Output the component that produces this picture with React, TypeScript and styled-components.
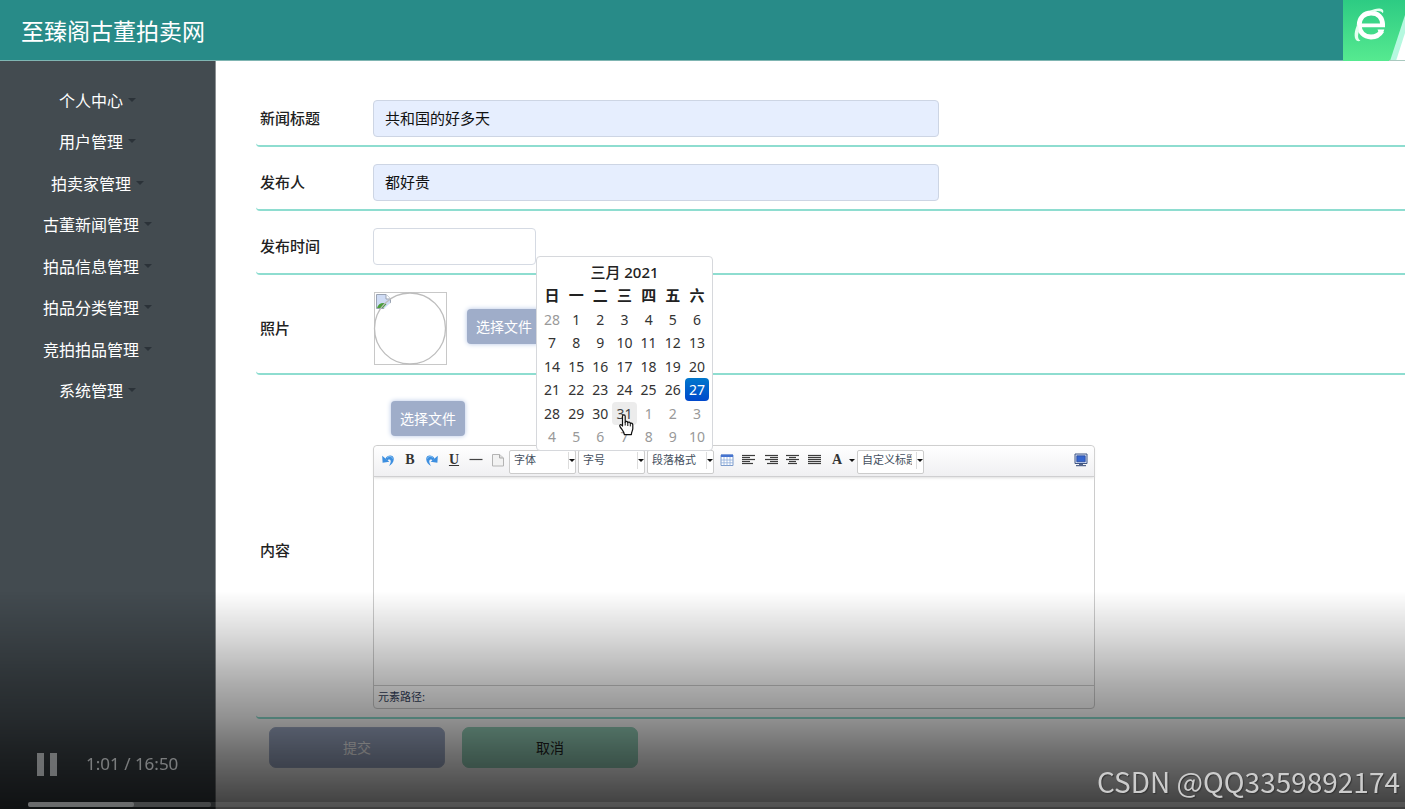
import React from "react";
import styled, { createGlobalStyle } from "styled-components";

const sans = `"Noto Sans", "Noto Sans CJK SC", sans-serif`;
const han = `"Noto Sans CJK SC", sans-serif`;

const GlobalStyle = createGlobalStyle`
  *, *::before, *::after { box-sizing: border-box; }
  body { margin: 0; background: #fff; font-family: ${han}; color: #222; }
  button, input, select, textarea { font-family: inherit; margin: 0; }
`;

const Page = styled.div`
  display: flex;
  flex-direction: column;
  min-height: 100vh;
  overflow: hidden;
`;

const Header = styled.header`
  display: flex;
  align-items: center;
  justify-content: space-between;
  height: 61px;
  padding-left: 21px;
  background: #288b88;
  border-bottom: 1px solid #7fb5b2;
`;

const SiteTitle = styled.h1`
  margin: 0;
  font-size: 23px;
  font-weight: 400;
  line-height: 30px;
  color: #fff;
`;

const BrowserBadge = styled.svg`
  display: block;
  width: 62px;
  height: 61px;
`;

const Body = styled.div`
  display: flex;
  flex: 1;
`;

const Sidebar = styled.nav`
  flex: 0 0 216px;
  padding: 18px 20px 0 0;
  background: #434b50;
  border-right: 1px solid #8d9194;
`;

const Menu = styled.ul`
  display: grid;
  grid-auto-rows: 1fr;
  height: 332px;
  margin: 0;
  padding: 0;
  list-style: none;
`;

const MenuItem = styled.li`
  display: flex;
  justify-content: center;
  align-items: center;
`;

const MenuLink = styled.a`
  display: flex;
  align-items: center;
  gap: 5px;
  font-size: 16px;
  line-height: 24px;
  color: #fff;
  text-decoration: none;
  &::after {
    content: "";
    border: 4px solid transparent;
    border-top-color: #2b3238;
    border-bottom: 0;
  }
`;

const Main = styled.main`
  flex: 1;
  min-width: 0;
  padding: 22px 0 42px 40px;
`;

const Row = styled.div`
  display: flex;
  align-items: center;
  padding: 17px 0 8px 4px;
  border-bottom: 2px solid #8eddd0;
  border-bottom-left-radius: 4px;
`;

const RowLabel = styled.label`
  flex: 0 0 113px;
  padding-bottom: 2px;
  font-size: 15px;
  font-weight: 500;
  line-height: 24px;
  color: #222;
`;

const TextInput = styled.input<{ $filled?: boolean }>`
  width: ${(p) => (p.$filled ? "566px" : "163px")};
  height: 37px;
  padding: 0 11px 2px;
  font-size: 15px;
  color: #111;
  background: ${(p) => (p.$filled ? "#e6eefe" : "#fff")};
  border: 1px solid ${(p) => (p.$filled ? "#cdd5e4" : "#d5dae3")};
  border-radius: 4px;
`;

const DateField = styled.div`
  position: relative;
  display: flex;
`;

const Calendar = styled.div`
  position: absolute;
  z-index: 10;
  top: 28px;
  left: 163px;
  width: 177px;
  padding: 4px 3px 2px;
  background: #fff;
  border: 1px solid #d6d8dc;
  border-radius: 4px;
`;

const MonthTable = styled.table`
  width: 100%;
  table-layout: fixed;
  border-collapse: collapse;
  font-family: ${sans};
  font-size: 14px;
  color: #222;
  caption {
    height: 23px;
    font-size: 15px;
    font-weight: 500;
    line-height: 23px;
  }
  th {
    height: 23px;
    padding: 0;
    font-size: 15px;
    font-weight: 700;
    line-height: 23px;
  }
  td {
    position: relative;
    padding: 0;
  }
  tr {
    height: 23px;
  }
  tbody tr:nth-child(odd) {
    height: 24px;
  }
`;

const Day = styled.button<{ $tone: "normal" | "other" | "active" | "hover" }>`
  display: block;
  width: 100%;
  height: 23px;
  padding: 0;
  border: 0;
  border-radius: 4px;
  font-size: 14px;
  line-height: 23px;
  text-align: center;
  color: ${(p) => ({ normal: "#333", other: "#999", active: "#fff", hover: "#444" })[p.$tone]};
  background: ${(p) =>
    ({
      normal: "none",
      other: "none",
      active: "linear-gradient(#0077cc, #0048cc)",
      hover: "#ececec",
    })[p.$tone]};
`;

const Pointer = styled.svg`
  position: absolute;
  z-index: 1;
  top: 13px;
  left: 6px;
  width: 17px;
  height: 22px;
`;

const FileButton = styled.button`
  width: 74px;
  height: 35px;
  padding: 0 0 2px;
  border: 0;
  border-radius: 4px;
  font-size: 14px;
  color: #fff;
  background: #9fadc9;
  box-shadow: 0 0 5px #b4c4e4;
`;

const PhotoBox = styled.div`
  display: flex;
  align-items: center;
  gap: 20px;
  ${FileButton} {
    margin-bottom: 4px;
  }
`;

const Thumb = styled.svg`
  display: block;
  width: 74px;
  height: 73px;
`;

const EditorColumn = styled.div`
  display: flex;
  flex-direction: column;
  align-items: flex-start;
  gap: 9px;
  padding-top: 9px;
  ${FileButton} {
    margin-left: 18px;
  }
`;

const Editor = styled.div`
  width: 722px;
  border: 1px solid #ccc;
  border-radius: 4px;
`;

const Toolbar = styled.div`
  display: flex;
  align-items: center;
  height: 31px;
  padding: 0 2px 2px 3px;
  background: linear-gradient(#fff, #f0f0f2);
  border-bottom: 1px solid #cfcfd1;
  border-radius: 4px 4px 0 0;
  box-shadow: 0 1px 3px #ddd;
`;

const Tool = styled.button`
  display: flex;
  align-items: center;
  justify-content: center;
  width: 22px;
  height: 22px;
  padding: 0;
  border: 0;
  background: none;
  font-family: "Liberation Serif", serif;
  font-size: 14px;
  font-weight: 700;
  color: #333;
  svg {
    display: block;
    width: 16px;
    height: 16px;
  }
`;

const ColorArrow = styled(Tool)`
  width: 8px;
  margin-right: 1px;
`;

const Spacer = styled.span`
  flex: 1;
`;

const Picker = styled.span`
  position: relative;
  display: flex;
  width: 67px;
  height: 24px;
  margin: 3px 2px 0 0;
  &::after {
    content: "";
    position: absolute;
    right: 1px;
    top: 9px;
    border: 3px solid transparent;
    border-top-color: #111;
    border-bottom: 0;
  }
  &::before {
    content: "";
    position: absolute;
    right: 7px;
    top: 2px;
    height: 17px;
    border-left: 1px solid #ddd;
  }
`;

const PickerSelect = styled.select`
  appearance: none;
  width: 100%;
  padding: 0 11px 5px 4px;
  border: 1px solid #ccc;
  border-radius: 2px;
  background: #fff;
  font-size: 11px;
  color: #44505e;
`;

const Area = styled.textarea`
  display: block;
  width: 100%;
  height: 208px;
  padding: 8px;
  border: 0;
  resize: none;
  outline: 0;
  background: transparent;
`;

const PathBar = styled.div`
  height: 23px;
  padding-left: 4px;
  border-top: 1px solid #ccc;
  font-size: 11px;
  line-height: 20px;
  color: #33415c;
`;

const Actions = styled.div`
  display: flex;
  gap: 17px;
  padding: 8px 0 0 13px;
`;

const ActionButton = styled.button<{ $kind: "submit" | "cancel" }>`
  width: 176px;
  height: 41px;
  padding: 0 0 2px;
  border: 1px solid ${(p) => (p.$kind === "submit" ? "#a6b2cc" : "#98d4bd")};
  border-radius: 7px;
  font-size: 14px;
  color: ${(p) => (p.$kind === "submit" ? "#fff" : "#222")};
  background: ${(p) => (p.$kind === "submit" ? "#a0adc9" : "#98d4bd")};
`;

const PlayerShade = styled.div`
  position: fixed;
  z-index: 20;
  left: 0;
  right: 0;
  bottom: 0;
  height: 218px;
  display: flex;
  flex-direction: column;
  justify-content: flex-end;
  padding-bottom: 2px;
  pointer-events: none;
  background: linear-gradient(
    rgba(0, 0, 0, 0) 0%,
    rgba(0, 0, 0, 0.16) 22%,
    rgba(0, 0, 0, 0.32) 42%,
    rgba(0, 0, 0, 0.43) 58%,
    rgba(0, 0, 0, 0.57) 74%,
    rgba(0, 0, 0, 0.76) 100%
  );
`;

const PlayerControls = styled.div`
  display: flex;
  align-items: center;
  gap: 28px;
  padding: 0 0 25px 36px;
`;

const PauseButton = styled.button`
  width: 22px;
  height: 24px;
  padding: 0;
  border: 0;
  background: none;
  svg {
    display: block;
  }
`;

const Clock = styled.span`
  font-family: ${sans};
  font-size: 17px;
  line-height: 26px;
  color: rgba(255, 255, 255, 0.42);
`;

const Track = styled.div`
  height: 5px;
  margin-left: 28px;
  border-radius: 2px 0 0 2px;
  background: rgba(255, 255, 255, 0.09);
`;

const Buffered = styled.div`
  width: 183px;
  height: 5px;
  border-radius: 2px;
  background: rgba(255, 255, 255, 0.14);
`;

const Played = styled.div`
  width: 106px;
  height: 5px;
  border-radius: 2px;
  background: rgba(255, 255, 255, 0.2);
`;

const Watermark = styled.span`
  position: fixed;
  z-index: 21;
  right: 5px;
  bottom: 10px;
  font-family: ${han};
  font-size: 28px;
  line-height: 36px;
  color: #ccc;
  text-shadow: 1px 1px 1px #333;
`;

const menu = [
  "个人中心",
  "用户管理",
  "拍卖家管理",
  "古董新闻管理",
  "拍品信息管理",
  "拍品分类管理",
  "竞拍拍品管理",
  "系统管理",
];

const weekdays = ["日", "一", "二", "三", "四", "五", "六"];
// March 2021 opens on a Monday, so the grid starts on February 28.
const cells = Array.from({ length: 42 }, (_, i) => {
  if (i === 0) return { n: 28, other: true };
  if (i <= 31) return { n: i, other: false };
  return { n: i - 31, other: true };
});
const weeks = Array.from({ length: 6 }, (_, w) => cells.slice(w * 7, w * 7 + 7));

const toneOf = (c: { n: number; other: boolean }) =>
  c.other ? "other" : c.n === 27 ? "active" : c.n === 31 ? "hover" : "normal";

function HandPointer() {
  return (
    <Pointer viewBox="0 0 17 22" aria-hidden="true">
      <path
        d="M4.5 2.2C4.5.4 7.2.4 7.2 2.2V8.2C7.6 7 9.6 7.2 9.7 8.6C10.4 7.6 12.2 8 12.3 9.4C13.4 8.8 14.8 9.4 14.8 11V14.6C14.8 16.6 13.4 17.6 13.4 20.6H6.4C6.2 17.6 3.6 15.4 2 12.6C1 10.8 2.8 9.8 4.5 12Z"
        fill="#fff"
        stroke="#111"
        strokeWidth="1.2"
        strokeLinejoin="round"
      />
      <path d="M7.2 8V11.5M9.8 9V12M12.3 9.8V12.4" stroke="#111" strokeWidth="1" fill="none" />
    </Pointer>
  );
}

function UndoIcon({ flip }: { flip?: boolean }) {
  return (
    <svg viewBox="0 0 16 16" aria-hidden="true">
      <g transform={flip ? "translate(16 0) scale(-1 1)" : undefined}>
        <path
          d="M5.5 6.600C7 2.800 13.800 2.200 13.800 7C13.800 10.500 11.500 12.500 9 14C10.500 11.500 11 9.800 10.600 8.600C10 7 8.200 7.400 7.400 8.800Z"
          fill="#3d8fe0"
        />
        <path d="M2.200 3.800L2.600 10.800L9.400 9.800Z" fill="#3d8fe0" />
        <path d="M7 5.600C9 3.800 12 4 12.600 6.600" fill="none" stroke="#8cc6f6" strokeWidth="1" />
      </g>
    </svg>
  );
}

function AlignIcon({ lines }: { lines: [number, number][] }) {
  return (
    <svg viewBox="0 0 16 16" aria-hidden="true">
      {lines.map(([x1, x2], i) => (
        <path key={i} d={`M${x1} ${3.5 + i * 2}H${x2}`} stroke="#3c3c3c" strokeWidth="1.2" />
      ))}
    </svg>
  );
}

function ToolPicker({ name }: { name: string }) {
  return (
    <Picker>
      <PickerSelect aria-label={name}>
        <option>{name}</option>
      </PickerSelect>
    </Picker>
  );
}

function EditorToolbar() {
  return (
    <Toolbar>
      <Tool type="button" aria-label="撤销"><UndoIcon /></Tool>
      <Tool type="button">B</Tool>
      <Tool type="button" aria-label="重做"><UndoIcon flip /></Tool>
      <Tool type="button"><u>U</u></Tool>
      <Tool type="button" aria-label="分隔线">
        <svg viewBox="0 0 16 16"><path d="M1.5 7.5H14.5" stroke="#444" strokeWidth="1.2" /></svg>
      </Tool>
      <Tool type="button" aria-label="新建">
        <svg viewBox="0 0 16 16">
          <path d="M2.5 2.5H9.5L13.5 6V14H2.5Z" fill="#f2f2f2" stroke="#b4b4b4" />
          <path d="M9.5 2.5V6H13.5" fill="#ddd" stroke="#aaa" />
        </svg>
      </Tool>
      <ToolPicker name="字体" />
      <ToolPicker name="字号" />
      <ToolPicker name="段落格式" />
      <Tool type="button" aria-label="表格">
        <svg viewBox="0 0 16 16">
          <path d="M2 3H14V13.5H2Z" fill="#fff" stroke="#7d9ccc" />
          <path d="M2 2.5H14V5H2Z" fill="#4573cf" />
          <path d="M2 8H14M2 10.8H14M5 5V13.5M8 5V13.5M11 5V13.5" stroke="#90addb" strokeWidth=".8" />
        </svg>
      </Tool>
      <Tool type="button" aria-label="左对齐">
        <AlignIcon lines={[[1, 14], [1, 9], [1, 14], [1, 9], [1, 12]]} />
      </Tool>
      <Tool type="button" aria-label="右对齐">
        <AlignIcon lines={[[2, 15], [7, 15], [2, 15], [7, 15], [4, 15]]} />
      </Tool>
      <Tool type="button" aria-label="居中">
        <AlignIcon lines={[[1, 14], [4, 11], [1, 14], [4, 11], [3, 12]]} />
      </Tool>
      <Tool type="button" aria-label="两端对齐">
        <AlignIcon lines={[[1, 14], [1, 14], [1, 14], [1, 14], [1, 14]]} />
      </Tool>
      <Tool type="button">A</Tool>
      <ColorArrow type="button" aria-label="字体颜色">
        <svg viewBox="0 0 16 16"><path d="M2 6H14L8 12Z" fill="#111" /></svg>
      </ColorArrow>
      <ToolPicker name="自定义标题" />
      <Spacer />
      <Tool type="button" aria-label="全屏">
        <svg viewBox="0 0 16 16">
          <path d="M2 2H14V11.5H2Z" fill="#dfe7f7" stroke="#3f5583" />
          <path d="M3.8 3.8H12.2V9.8H3.8Z" fill="#3565cf" stroke="#27489a" strokeWidth=".8" />
          <path d="M6 12H10V13H13V14.2H3V13H6Z" fill="#53648a" />
        </svg>
      </Tool>
    </Toolbar>
  );
}

export default function App() {
  return (
    <>
      <GlobalStyle />
      <Page>
        <Header>
          <SiteTitle>至臻阁古董拍卖网</SiteTitle>
          <BrowserBadge viewBox="0 0 62 61" role="img" aria-label="浏览器">
            <defs>
              <linearGradient id="badge" x1="0" y1="0" x2="0" y2="1">
                <stop offset="0" stopColor="#2dcb83" />
                <stop offset="1" stopColor="#56ea90" />
              </linearGradient>
            </defs>
            <rect width="62" height="61" fill="url(#badge)" />
            <path d="M62 15V61H47Z" fill="#b5f8df" />
            <path d="M62 33V61H53Z" fill="#fff" />
            <path d="M46 60.5H62" stroke="#a9c9bf" />
            <path
              d="M38.800 31C36.500 35 32.500 37 28 37C21 37 16.200 32 16.200 25C16.200 18 21 13 28 13C35 13 39.600 17.600 39.600 25"
              fill="none"
              stroke="#fff"
              strokeWidth="4.800"
            />
            <path d="M18 23.500H42V27.200H18ZM34.500 29.500H41.300L40.200 32.500L36 33Z" fill="#fff" />
            <path
              d="M27 11C31 8.500 37 7.500 39.500 9.500C40.500 10.500 40.600 12 39.800 13.200C38.500 10.800 34 10.500 30 12ZM14.800 24C11.200 30 10.500 38 13.500 40.500C15 41.600 16.500 41.300 17.500 40.500C14.800 39.500 14.500 36 16 31Z"
              fill="#e4fff0"
            />
          </BrowserBadge>
        </Header>
        <Body>
          <Sidebar>
            <Menu>
              {menu.map((m) => (
                <MenuItem key={m}>
                  <MenuLink href="#">{m}</MenuLink>
                </MenuItem>
              ))}
            </Menu>
          </Sidebar>
          <Main>
            <form>
              <Row>
                <RowLabel htmlFor="title">新闻标题</RowLabel>
                <TextInput id="title" $filled defaultValue="共和国的好多天" />
              </Row>
              <Row>
                <RowLabel htmlFor="author">发布人</RowLabel>
                <TextInput id="author" $filled defaultValue="都好贵" />
              </Row>
              <Row>
                <RowLabel htmlFor="time">发布时间</RowLabel>
                <DateField>
                  <TextInput id="time" />
                  <Calendar>
                    <MonthTable>
                      <caption>三月 2021</caption>
                      <thead>
                        <tr>
                          {weekdays.map((d) => (
                            <th key={d} scope="col">{d}</th>
                          ))}
                        </tr>
                      </thead>
                      <tbody>
                        {weeks.map((week, w) => (
                          <tr key={w}>
                            {week.map((c, i) => (
                              <td key={i}>
                                <Day type="button" $tone={toneOf(c)}>{c.n}</Day>
                                {toneOf(c) === "hover" && <HandPointer />}
                              </td>
                            ))}
                          </tr>
                        ))}
                      </tbody>
                    </MonthTable>
                  </Calendar>
                </DateField>
              </Row>
              <Row>
                <RowLabel htmlFor="photo">照片</RowLabel>
                <PhotoBox>
                  <Thumb viewBox="0 0 74 73" role="img" aria-label="照片预览">
                    <rect x="1.500" y=".5" width="72" height="72" fill="#fff" stroke="#c8c8c8" />
                    <path d="M3.500 2.500H13L17.500 7V16.500H3.500Z" fill="#cfdcf5" stroke="#9aa3b3" />
                    <path d="M13 2.500V7H17.500" fill="#fff" stroke="#9aa3b3" />
                    <path d="M4 16C5 11.500 10 9.500 13.500 12L10 16Z" fill="#4c9e3c" />
                    <path d="M10 17.500L18 10.500V17.500Z" fill="#fff" />
                    <circle cx="37" cy="36.500" r="35.500" fill="none" stroke="#bdbdbd" strokeWidth="1.300" />
                  </Thumb>
                  <FileButton id="photo" type="button">选择文件</FileButton>
                </PhotoBox>
              </Row>
              <Row>
                <RowLabel htmlFor="content">内容</RowLabel>
                <EditorColumn>
                  <FileButton type="button">选择文件</FileButton>
                  <Editor>
                    <EditorToolbar />
                    <Area id="content" />
                    <PathBar>元素路径:</PathBar>
                  </Editor>
                </EditorColumn>
              </Row>
              <Actions>
                <ActionButton type="button" $kind="submit">提交</ActionButton>
                <ActionButton type="button" $kind="cancel">取消</ActionButton>
              </Actions>
            </form>
          </Main>
        </Body>
      </Page>
      <PlayerShade>
        <PlayerControls>
          <PauseButton type="button" aria-label="暂停">
            <svg width="22" height="24" viewBox="0 0 22 24">
              <path d="M1 1H8V24H1ZM14 1H21V24H14Z" fill="#fff" fillOpacity=".36" />
            </svg>
          </PauseButton>
          <Clock>1:01 / 16:50</Clock>
        </PlayerControls>
        <Track>
          <Buffered>
            <Played />
          </Buffered>
        </Track>
      </PlayerShade>
      <Watermark>CSDN @QQ3359892174</Watermark>
    </>
  );
}
